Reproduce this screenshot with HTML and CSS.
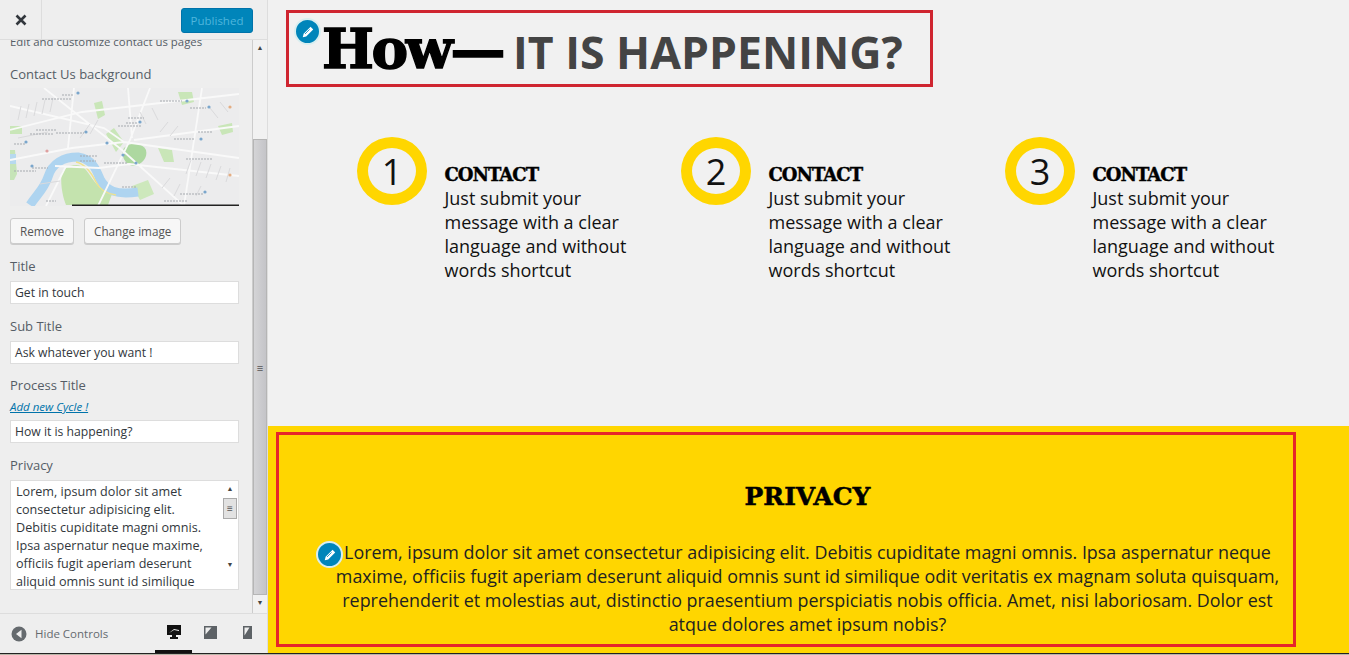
FILE: index.html
```html
<!DOCTYPE html>
<html lang="en">
  <head>
    <meta charset="UTF-8" />
    <title>Customize Contact Us</title>
    <link rel="stylesheet" href="styles.css">
  </head>
  <body>
    <div class="app">
      <aside class="sidebar">
        <div class="topbar">
          <div class="close">
            <svg width="12" height="12" viewBox="0 0 12 12"><path d="M1.5 1.5l9 9M10.5 1.5l-9 9" stroke="#32373c" stroke-width="2.6" /></svg>
          </div>
          <button class="publish">Published</button>
        </div>

        <div class="panel">
          <div class="controls">
            <p class="desc">Edit and customize contact us pages</p>
            <label class="first">Contact Us background</label>
            <svg class="map" width="229" height="118" viewBox="0 0 229 118">
              <rect width="229" height="118" fill="#ececed" />
              <!-- parks -->
              <path d="M0 62h5l2 24-3 6H0z" fill="#c6e4b8" />
              <path d="M52 84c6-8 18-10 24-2 8 10 12 20 26 24l-4 11H56c-4-10-6-24-4-33z" fill="#c4e3ae" />
              <path d="M114 60c6-6 18-6 22 2 2 8-4 14-12 16-8 0-14-10-10-18z" fill="#add8a0" />
              <path d="M96 46l8-6 10 14-8 10zM84 15l8-2 3 14-7 4zM168 4h14l2 10-12 3zM208 38l14-3 1 9-11 3zM148 60l14 2 2 12-10 0zM0 38h12v8H0z" fill="#c9e6b8" />
              <path d="M122 98l16-6 6 14-14 6z" fill="#cde8bc" />
              <!-- river -->
              <path d="M20 117c8-12 14-16 18-28 4-14 16-20 30-20 14 2 18 12 22 22 6 12 16 16 38 13" stroke="#aed4f0" stroke-width="9" fill="none" />
              <path d="M0 66h6v10H0z" fill="#b7d9ef" />
              <path d="M66 74c10 2 16 12 20 20 4 8 12 12 20 13" stroke="#efe28e" stroke-width="1.5" fill="none" />
              <!-- main streets -->
              <path d="M0 42L72 24 229 6M34 0l78 62 62 56M0 72l62-12 52-6 115 16M140 0l-20 52-32 66M229 88l-110-12-30 4-44-2M64 0l-6 60M192 0l-18 118M0 18l94 22 20 14M118 0l4 50M229 38l-105 14M36 118l20-40" stroke="#f9f9f9" stroke-width="1.8" fill="none" />
              <!-- side streets -->
              <path d="M8 32l3-14M16 30l3-14M24 28l3-14M32 26l3-14M40 24l3-14M150 44l8-10M160 48l8-10M176 86l5-14M186 88l5-14M196 90l5-14M206 92l5-14M216 94l4-14M70 50l10-14M80 46l8-14M130 24l6 12M142 20l6 12M200 20l8 10M210 14l8 10M152 100l8-10M164 108l6-12M186 108l5-10M8 50l30-6M30 96l20-3" stroke="#dadadc" stroke-width="1" fill="none" />
              <!-- place labels -->
              <path d="M32 11h30M52 7h12M150 13h22M180 20h16M116 35h12M108 38h24M118 30h16M46 45h28M20 46h24M26 42h20M164 51h20M188 44h14M70 68h18M70 73h16M94 75h24M4 83h22M22 80h16M176 71h26M170 106h24M112 99h14M154 113h24M36 113h10M4 56h12" stroke="#a6a9af" stroke-width="1.2" stroke-dasharray="2 1" fill="none" />
              <!-- pins -->
              <g fill="#7aa6cc">
                <circle cx="68" cy="5" r="1.6" />
                <circle cx="177" cy="13" r="1.6" />
                <circle cx="199" cy="19" r="1.6" />
                <circle cx="130" cy="34" r="1.6" />
                <circle cx="76" cy="44" r="1.6" />
                <circle cx="16" cy="54" r="1.6" />
                <circle cx="97" cy="55" r="1.6" />
                <circle cx="191" cy="51" r="1.6" />
                <circle cx="113" cy="67" r="1.6" />
                <circle cx="126" cy="75" r="1.6" />
                <circle cx="22" cy="78" r="1.6" />
                <circle cx="195" cy="104" r="1.6" />
              </g>
              <circle cx="37" cy="63" r="1.6" fill="#dfa0a0" />
              <circle cx="220" cy="19" r="1.6" fill="#e4ad82" />
              <circle cx="220" cy="87" r="1.6" fill="#e4ad82" />
              <path d="M62 117.3h167" stroke="#222" stroke-width="1.4" />
            </svg>
            <div class="img-btns">
              <button class="btn">Remove</button>
              <button class="btn">Change image</button>
            </div>

            <label>Title</label>
            <div class="input">Get in touch</div>
            <label>Sub Title</label>
            <div class="input">Ask whatever you want !</div>
            <label>Process Title</label>
            <a class="add-link">Add new Cycle !</a>
            <div class="input">How it is happening?</div>
            <label>Privacy</label>
            <div class="textarea">
              <div class="textarea-text">Lorem, ipsum dolor sit amet consectetur adipisicing elit. Debitis cupiditate magni omnis. Ipsa aspernatur neque maxime, officiis fugit aperiam deserunt aliquid omnis sunt id similique</div>
              <div class="mini-scroll">
                <span class="arr">&#9650;</span>
                <div class="mini-thumb">&#8801;</div>
                <span class="arr arr-down">&#9660;</span>
              </div>
            </div>
          </div>
          <div class="scrollbar">
            <span class="arr">&#9650;</span>
            <div class="thumb">&#8801;</div>
            <span class="arr">&#9660;</span>
          </div>
        </div>

        <div class="footer">
          <span class="hide-icon">
            <svg width="16" height="16" viewBox="0 0 16 16"><circle cx="8" cy="8" r="7.5" fill="#656a6e" /><path d="M10.5 3.8v8.4L5 8z" fill="#eee" /></svg>
          </span>
          <span class="hide-text">Hide Controls</span>
          <div class="devices">
            <span class="device active">
              <svg width="16" height="14" viewBox="0 0 16 14"><path d="M1 0h14v10H1zM6 10h4v2h2v2H4v-2h2z" fill="#111" /><path d="M3 8l5-4 5 1v1L8 5 3 8z" fill="#eee" /></svg>
            </span>
            <span class="device">
              <svg width="13" height="13" viewBox="0 0 13 13"><path d="M0 0h13v13H0z" fill="#5d6266" /><path d="M1.5 1.5h6l-6 7z" fill="#eee" /></svg>
            </span>
            <span class="device">
              <svg width="9" height="13" viewBox="0 0 9 13"><path d="M0 0h9v13H0z" fill="#5d6266" /><path d="M1.5 1.5h5l-5 8z" fill="#eee" /></svg>
            </span>
          </div>
        </div>
      </aside>

      <main class="preview">
        <div class="process">
          <div class="title-box">
            <span class="edit-dot dot-title">
              <svg width="12" height="12" viewBox="0 0 12 12"><path d="M8.6.8l2.6 2.6-7 7-3.4.8.8-3.4z" fill="#fff" /><path d="M7.6 3.4L3 8" stroke="#0085ba" stroke-width="0.8" /></svg>
            </span>
            <span class="how">How&mdash;</span>
            <span class="how-sub">IT IS HAPPENING?</span>
          </div>

          <div class="steps">
            <div class="step">
              <div class="circle">1</div>
              <div class="step-text">
                <h4>CONTACT</h4>
                <p>Just submit your message with a clear language and without words shortcut</p>
              </div>
            </div>
            <div class="step">
              <div class="circle">2</div>
              <div class="step-text">
                <h4>CONTACT</h4>
                <p>Just submit your message with a clear language and without words shortcut</p>
              </div>
            </div>
            <div class="step">
              <div class="circle">3</div>
              <div class="step-text">
                <h4>CONTACT</h4>
                <p>Just submit your message with a clear language and without words shortcut</p>
              </div>
            </div>
          </div>
        </div>

        <section class="privacy">
          <div class="privacy-box">
            <span class="edit-dot dot-privacy">
              <svg width="12" height="12" viewBox="0 0 12 12"><path d="M8.6.8l2.6 2.6-7 7-3.4.8.8-3.4z" fill="#fff" /><path d="M7.6 3.4L3 8" stroke="#0085ba" stroke-width="0.8" /></svg>
            </span>
            <h2>PRIVACY</h2>
            <p>Lorem, ipsum dolor sit amet consectetur adipisicing elit. Debitis cupiditate magni omnis. Ipsa aspernatur neque maxime, officiis fugit aperiam deserunt aliquid omnis sunt id similique odit veritatis ex magnam soluta quisquam, reprehenderit et molestias aut, distinctio praesentium perspiciatis nobis officia. Amet, nisi laboriosam. Dolor est atque dolores amet ipsum nobis?</p>
          </div>
        </section>
      </main>
    </div>
    <div class="bottom-line"></div>
  </body>
</html>
```

FILE: styles.css
```css
* {
  margin: 0;
  padding: 0;
  box-sizing: border-box;
}
html,
body {
  height: 655px;
  overflow: hidden;
}
body {
  font-family: "Open Sans", "Noto Sans", sans-serif;
  background-color: #f1f1f1;
  color: #111;
}
.app {
  display: flex;
  height: 653px;
}
.bottom-line {
  height: 2px;
  background-color: #b9b6a8;
  border-top: 1px solid #222;
}

/* left customizer panel */
.sidebar {
  width: 268px;
  flex-shrink: 0;
  display: flex;
  flex-direction: column;
  background-color: #eeeeee;
  border-right: 1px solid #ddd;
  color: #555d66;
}
.topbar {
  height: 40px;
  display: flex;
  align-items: center;
  justify-content: space-between;
  padding-right: 14px;
  background-color: #eeeeee;
  border-bottom: 1px solid #ddd;
  position: relative;
  z-index: 2;
}
.close {
  width: 42px;
  height: 39px;
  display: flex;
  align-items: center;
  justify-content: center;
  border-right: 1px solid #ddd;
}
.publish {
  width: 72px;
  height: 25px;
  margin-top: 1px;
  background-color: #0085ba;
  border: 1px solid #0073aa;
  border-radius: 3px;
  color: #4fb6dd;
  font-family: inherit;
  font-size: 11.5px;
}
.panel {
  flex: 1;
  display: flex;
  min-height: 0;
}
.controls {
  width: 252px;
  padding: 0 13px 0 10px;
  overflow: hidden;
  font-size: 12px;
}
.desc {
  margin-top: -7px;
  height: 33px;
  line-height: 17px;
  font-size: 11.4px;
}
label {
  display: block;
  font-size: 13px;
  line-height: 17px;
  margin-top: 10px;
  margin-bottom: 6px;
}
label.first {
  margin-top: 0;
  margin-bottom: 5px;
}
.map {
  display: block;
}
.img-btns {
  display: flex;
  gap: 10px;
  margin: 12px 0 14px;
}
.btn {
  height: 26px;
  padding: 0 9px;
  background-color: #f7f7f7;
  border: 1px solid #ccc;
  border-radius: 3px;
  box-shadow: 0 1px 0 #ccc;
  color: #555;
  font-family: inherit;
  font-size: 11.7px;
}
.input {
  height: 23px;
  padding: 0 4px;
  line-height: 22px;
  background-color: #fff;
  border: 1px solid #ddd;
  color: #32373c;
  font-size: 12.2px;
  margin-bottom: 13.5px;
}
.add-link {
  display: block;
  margin: -1px 0 5px;
  color: #0073aa;
  font-size: 11.5px;
  font-style: italic;
  line-height: 16px;
  text-decoration: underline;
}
.textarea {
  height: 110px;
  display: flex;
  background-color: #fff;
  border: 1px solid #ddd;
  overflow: hidden;
  color: #32373c;
}
.textarea-text {
  flex: 1;
  padding: 2px 12px 0 5px;
  font-size: 12.6px;
  line-height: 18px;
}
.mini-scroll {
  width: 16px;
  height: 92px;
  flex-shrink: 0;
  display: flex;
  flex-direction: column;
  align-items: center;
  color: #555;
}
.mini-thumb {
  width: 14px;
  height: 21px;
  margin-top: 1px;
  display: flex;
  align-items: center;
  justify-content: center;
  background-color: #e2e2e2;
  border: 1px solid #aaa;
  font-size: 10px;
}
.arr {
  font-size: 7px;
  line-height: 16px;
  color: #444;
}
.arr-down {
  margin-top: auto;
}
.scrollbar {
  width: 15px;
  display: flex;
  flex-direction: column;
  align-items: center;
  background-color: #f1f1f1;
  border-left: 1px solid #ccc;
}
.thumb {
  width: 14px;
  height: 456px;
  margin-top: 83px;
  display: flex;
  align-items: center;
  justify-content: center;
  background: linear-gradient(to right, #d4d4d6, #c4c4c8);
  border: 1px solid #b5b5b5;
  color: #555;
  font-size: 11px;
}
.footer {
  height: 40px;
  display: flex;
  align-items: center;
  padding-left: 11px;
  background-color: #eeeeee;
  border-top: 1px solid #ddd;
  font-size: 11.5px;
}
.hide-icon {
  display: flex;
}
.hide-text {
  margin-left: 8px;
  color: #656a6e;
  white-space: nowrap;
}
.devices {
  display: flex;
  align-self: stretch;
  margin-left: 47px;
}
.device {
  width: 37px;
  flex-shrink: 0;
  display: flex;
  align-items: center;
  justify-content: center;
  border-bottom: 3px solid transparent;
}
.device.active {
  border-bottom-color: #111;
}

/* site preview */
.preview {
  flex: 1;
  min-width: 0;
  display: flex;
  flex-direction: column;
}
.process {
  height: 426px;
  padding: 10px 0 0 18px;
}
.title-box {
  position: relative;
  width: 647px;
  height: 77px;
  display: flex;
  align-items: center;
  padding-left: 33px;
  border: 3px solid #cf2530;
}
.how {
  font-family: "DejaVu Serif", serif;
  font-size: 55px;
  font-weight: 700;
  letter-spacing: -2.5px;
  -webkit-text-stroke: 1.4px #000;
  color: #000;
}
.how-sub {
  margin-left: 10px;
  margin-top: 5px;
  font-size: 44.6px;
  font-weight: 700;
  color: #444;
}
.edit-dot {
  position: absolute;
  width: 27px;
  height: 27px;
  display: flex;
  align-items: center;
  justify-content: center;
  background-color: #0085ba;
  border: 2px solid #d8eef0;
  border-radius: 50%;
}
.dot-title {
  left: 5px;
  top: 5px;
}
.dot-privacy {
  left: 37px;
  top: 106px;
}
.steps {
  display: flex;
  margin-top: 50px;
  padding-left: 71px;
}
.step {
  width: 324px;
  display: flex;
}
.circle {
  width: 70px;
  height: 68px;
  display: flex;
  align-items: center;
  justify-content: center;
  flex-shrink: 0;
  border: 11px solid #ffd600;
  border-radius: 50%;
  font-size: 36px;
}
.step-text {
  width: 190px;
  margin-left: 17.5px;
  margin-top: 27px;
}
.step-text h4 {
  font-family: "DejaVu Serif", serif;
  font-size: 18px;
  font-weight: 700;
  line-height: 22px;
  letter-spacing: -1px;
  -webkit-text-stroke: 0.4px #000;
  color: #000;
}
.step-text p {
  font-size: 18px;
  line-height: 24px;
}
.privacy {
  height: 227px;
  padding: 6px 53px 0 8px;
  background-color: #ffd600;
}
.privacy-box {
  position: relative;
  height: 215px;
  padding: 46px 0 0 43px;
  text-align: center;
  border: 3px solid #e6262a;
}
.privacy-box h2 {
  font-family: "DejaVu Serif", serif;
  font-size: 25px;
  font-weight: 700;
  line-height: 32px;
  -webkit-text-stroke: 0.5px #000;
  color: #000;
}
.privacy-box p {
  margin-top: 27px;
  font-size: 17.9px;
  line-height: 24px;
  color: #222;
}
```
